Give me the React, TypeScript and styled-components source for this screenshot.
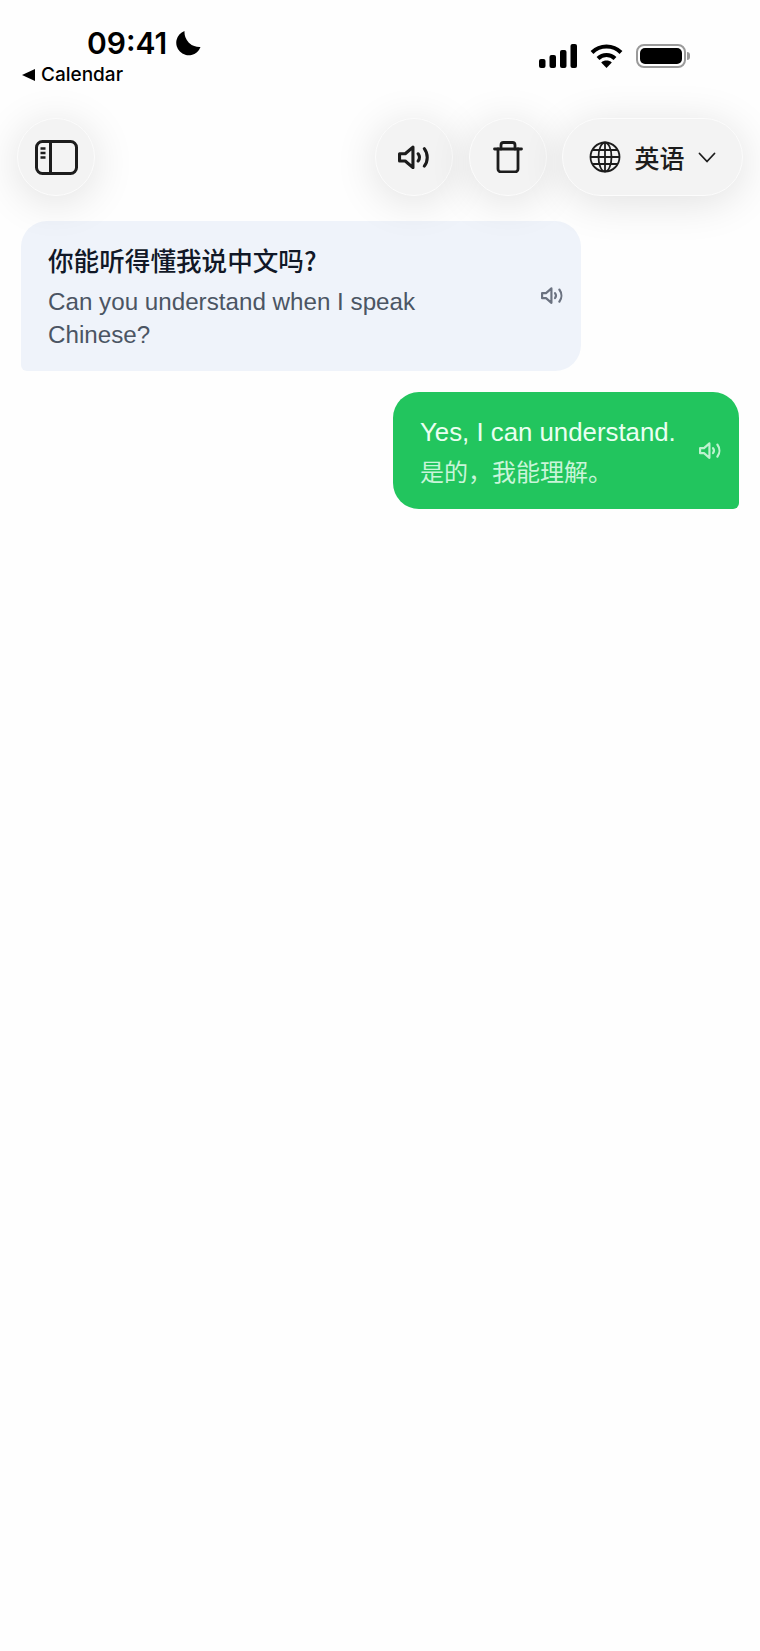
import React from 'react';
import styled, { createGlobalStyle } from 'styled-components';

const GlobalStyle = createGlobalStyle`
  html, body { margin: 0; padding: 0; background: #fefefe; }
  body { font-family: "Liberation Sans", "Noto Sans CJK SC", sans-serif; }
`;

const SpeakerIcon = ({ width, strokeWidth = 3 }: { width: number; strokeWidth?: number }) => (
  <svg width={width} height={(width * 24) / 32} viewBox="0 0 32 24" fill="none" stroke="currentColor" strokeWidth={strokeWidth} strokeLinecap="round" strokeLinejoin="round">
    <path d="M1.500 8.500v7h5.500l7.500 6.500V2L7 8.500z" />
    <path d="M19.500 8.500c1.800 2.300 1.800 4.700 0 7" />
    <path d="M25.500 3.500c3.800 5 3.800 12 0 17" />
  </svg>
);

const App: React.FC = () => {
  return (
    <Page>
      <GlobalStyle />
      <StatusBar>
        <StatusLeft>
          <TimeRow>
            <Time>09:41</Time>
            <svg width="26" height="26" viewBox="0 0 26 26" fill="#000">
              <path d="M9.500 1A12.500 12.500 0 1 0 25.500 17 15 15 0 0 1 9.500 1z" />
            </svg>
          </TimeRow>
          <BackLink>
            <svg width="13" height="12" viewBox="0 0 13 12" fill="#000">
              <path d="M0 6l13-6v12z" />
            </svg>
            Calendar
          </BackLink>
        </StatusLeft>
        <StatusRight>
          <svg width="38" height="24" viewBox="0 0 38 24" fill="#000">
            <rect x="0" y="15" width="6.500" height="9" rx="2" />
            <rect x="10.500" y="11" width="6.500" height="13" rx="2" />
            <rect x="21" y="6" width="6.500" height="18" rx="2" />
            <rect x="31.500" y="0" width="6.500" height="24" rx="2" />
          </svg>
          <svg width="33" height="25" viewBox="0 0 33 25" fill="none" stroke="#000" strokeWidth="4">
            <path d="M2 9.500C10 1.500 23 1.500 31 9.500" />
            <path d="M8 15.500c4.800-4.800 12.200-4.800 17 0" />
            <path d="M16.500 25l-5.300-5.500c3-2.600 7.600-2.600 10.600 0z" fill="#000" stroke="none" />
          </svg>
          <Battery>
            <BatteryFill />
          </Battery>
        </StatusRight>
      </StatusBar>

      <Toolbar>
        <RoundButton>
          <svg width="43" height="35" viewBox="0 0 43 35" fill="none" stroke="#1c1c1c" strokeWidth="3">
            <rect x="1.500" y="1.500" width="40" height="32" rx="6" />
            <path d="M15.500 1.500v32" />
            <path d="M5.500 8.500h5M5.500 13h5M5.500 17.500h5" strokeWidth="2.400" />
          </svg>
        </RoundButton>
        <ToolbarGroup>
          <RoundButton>
            <SpeakerIcon width={33} />
          </RoundButton>
          <RoundButton>
            <svg width="30" height="32" viewBox="0 0 30 32" fill="none" stroke="#1c1c1c" strokeWidth="2.800" strokeLinecap="round" strokeLinejoin="round">
              <path d="M1.500 8h27" />
              <path d="M8 8V4a2.500 2.500 0 0 1 2.500-2.500h9A2.500 2.500 0 0 1 22 4v4" />
              <path d="M5 8v20a3 3 0 0 0 3 3h14a3 3 0 0 0 3-3V8" />
            </svg>
          </RoundButton>
          <LanguageButton>
            <svg width="32" height="32" viewBox="0 0 32 32" fill="none" stroke="#1c1c1c" strokeWidth="1.800">
              <circle cx="16" cy="16" r="14.500" />
              <ellipse cx="16" cy="16" rx="6.500" ry="14.500" />
              <path d="M16 1.500v29M1.500 16h29M3.500 9h25M3.500 23h25" />
            </svg>
            <LanguageLabel>英语</LanguageLabel>
            <svg width="18" height="11" viewBox="0 0 18 11" fill="none" stroke="#1c1c1c" strokeWidth="1.800" strokeLinecap="round" strokeLinejoin="round">
              <path d="M1.500 1.500L9 9.500l7.500-8" />
            </svg>
          </LanguageButton>
        </ToolbarGroup>
      </Toolbar>

      <Messages>
        <Bubble $mine={false}>
          <BubbleText>
            <Original>你能听得懂我说中文吗?</Original>
            <Translation>Can you understand when I speak Chinese?</Translation>
          </BubbleText>
          <PlayIcon $mine={false}>
            <SpeakerIcon width={23} />
          </PlayIcon>
        </Bubble>
        <Bubble $mine>
          <BubbleText>
            <MineText>Yes, I can understand.</MineText>
            <MineTranslation>是的，我能理解。</MineTranslation>
          </BubbleText>
          <PlayIcon $mine>
            <SpeakerIcon width={23} />
          </PlayIcon>
        </Bubble>
      </Messages>
    </Page>
  );
};

const Page = styled.div`
  width: 760px;
  height: 1651px;
  overflow: hidden;
  background: #fefefe;
  color: #000;
`;

const StatusBar = styled.div`
  height: 118px;
  box-sizing: border-box;
  padding: 27px 74px 0 22px;
  display: flex;
  justify-content: space-between;
  align-items: flex-start;
`;

const StatusLeft = styled.div`
  display: flex;
  flex-direction: column;
  gap: 4px;
`;

const TimeRow = styled.div`
  display: flex;
  align-items: center;
  gap: 8px;
  padding-left: 65px;
  height: 32px;
`;

const Time = styled.span`
  font-family: Inter, sans-serif;
  font-size: 30px;
  font-weight: 600;
  line-height: 32px;
`;

const BackLink = styled.div`
  display: flex;
  align-items: center;
  gap: 6px;
  font-family: Inter, sans-serif;
  font-size: 19px;
  font-weight: 500;
  line-height: 24px;
`;

const StatusRight = styled.div`
  display: flex;
  align-items: center;
  gap: 13px;
  padding-top: 16px;
`;

const Battery = styled.div`
  position: relative;
  box-sizing: border-box;
  width: 50px;
  height: 24px;
  border: 2px solid #9a9a9a;
  border-radius: 8px;
  padding: 2px;

  &::after {
    content: '';
    position: absolute;
    right: -6px;
    top: 6px;
    width: 3px;
    height: 8px;
    background: #9a9a9a;
    border-radius: 0 3px 3px 0;
  }
`;

const BatteryFill = styled.div`
  width: 100%;
  height: 100%;
  background: #000;
  border-radius: 5px;
`;

const Toolbar = styled.div`
  position: relative;
  z-index: 1;
  display: flex;
  justify-content: space-between;
  align-items: center;
  height: 78px;
  padding: 0 17px;
`;

const ToolbarGroup = styled.div`
  display: flex;
  align-items: center;
  gap: 15.500px;
`;

const RoundButton = styled.div`
  box-sizing: border-box;
  width: 78px;
  height: 78px;
  border-radius: 50%;
  display: flex;
  align-items: center;
  justify-content: center;
  background: #f3f3f3;
  border: 1.500px solid #fcfcfc;
  color: #1c1c1c;
  box-shadow: 0 6px 44px rgba(0, 0, 0, 0.12);
`;

const LanguageButton = styled(RoundButton)`
  width: 181px;
  border-radius: 39px;
  gap: 13px;
`;

const LanguageLabel = styled.span`
  font-family: "Noto Sans CJK SC", sans-serif;
  font-size: 25px;
  font-weight: 500;
  color: #1c1c1c;
  line-height: 30px;
`;

const Messages = styled.div`
  display: flex;
  flex-direction: column;
  gap: 21px;
  padding: 25px 21px 0;
`;

const Bubble = styled.div<{ $mine: boolean }>`
  box-sizing: border-box;
  display: flex;
  align-items: center;
  justify-content: space-between;
  align-self: ${(props) => (props.$mine ? 'flex-end' : 'flex-start')};
  width: ${(props) => (props.$mine ? '346px' : '560px')};
  height: ${(props) => (props.$mine ? '117px' : '150px')};
  padding: 0 17px 0 27px;
  background: ${(props) => (props.$mine ? '#22c55e' : '#eff3fa')};
  border-radius: ${(props) => (props.$mine ? '26px 26px 6px 26px' : '26px 26px 26px 6px')};
`;

const BubbleText = styled.div`
  display: flex;
  flex-direction: column;
  min-width: 0;
  padding-top: 2px;
`;

const Original = styled.div`
  font-family: "Noto Sans CJK SC", sans-serif;
  font-size: 25.600px;
  font-weight: 500;
  line-height: 32px;
  color: #111827;
  margin-bottom: 9px;
`;

const Translation = styled.div`
  width: 440px;
  font-size: 24.200px;
  line-height: 33px;
  color: #4b5563;
`;

const MineText = styled.div`
  font-size: 25.800px;
  line-height: 33px;
  color: #eafff1;
  white-space: nowrap;
`;

const MineTranslation = styled.div`
  font-family: "Noto Sans CJK SC", sans-serif;
  font-size: 24px;
  line-height: 33px;
  margin-top: 5px;
  color: #c9f5d9;
`;

const PlayIcon = styled.div<{ $mine: boolean }>`
  display: flex;
  color: ${(props) => (props.$mine ? '#bdf2cf' : '#6b7280')};
  margin-top: ${(props) => (props.$mine ? '0' : '-1px')};
`;

export default App;
